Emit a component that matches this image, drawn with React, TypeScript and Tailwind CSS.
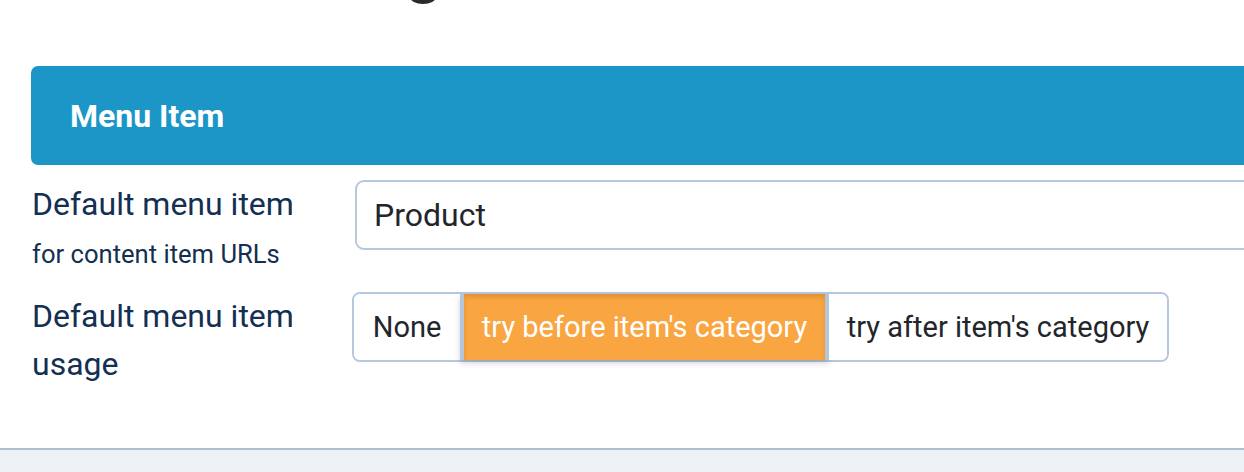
export default function App() {
  return (
    <div className="h-[472px] w-full overflow-hidden bg-gradient-to-b from-[#dfe6ee] to-[#eef2f7] font-['Roboto',sans-serif]">
      <div className="border-b-2 border-[#adbfd3] bg-white pb-[60px]">
        {/* cropped glyph from the heading above */}
        <div className="h-[66px] pl-[409px]">
          <svg width="28" height="5" viewBox="0 0 28 5">
            <ellipse cx="14" cy="-3" rx="13" ry="7" fill="#2b2b2b" />
          </svg>
        </div>

        <div className="w-[1300px] pl-[31px]">
          {/* Card header */}
          <div className="flex h-[99px] items-center rounded-l-[7px] bg-[#1b96c7] pl-[39px]">
            <h2 className="text-[32px] font-bold leading-[48px] text-white">Menu Item</h2>
          </div>

          {/* Row: default menu item */}
          <div className="mt-[15px] flex">
            <div className="w-[321px] pl-px text-[#132f52]">
              <div className="text-[32px] leading-[48px]">Default menu item</div>
              <div className="mt-[7px] text-[25.6px] leading-[38.4px]">for content item URLs</div>
            </div>
            <div className="ml-[3px] flex h-[70px] flex-1 items-center rounded-[9px] border-2 border-[#b6c8dd] bg-white pl-[17px] text-[32px] text-[#22262a]">
              Product
            </div>
          </div>

          {/* Row: default menu item usage */}
          <div className="mt-[19px] flex">
            <div className="w-[321px] pl-px text-[32px] leading-[48px] text-[#132f52]">
              Default menu item usage
            </div>
            <div className="flex h-[70px] rounded-[8px] border-2 border-[#b6c8dd] text-[29px]">
              <div className="flex w-[106px] items-center justify-center rounded-l-[6px] bg-white text-[#22262a]">
                None
              </div>
              <div className="flex w-[369px] items-center justify-center border-x-4 border-[#b3c6dc] bg-[#f9a541] text-white shadow-[inset_0_3px_4px_rgba(150,80,0,0.25),0_3px_6px_rgba(0,0,0,0.18)]">
                try before item's category
              </div>
              <div className="flex w-[338px] items-center justify-center rounded-r-[6px] bg-white text-[#22262a]">
                try after item's category
              </div>
            </div>
          </div>
        </div>
      </div>
    </div>
  );
}
